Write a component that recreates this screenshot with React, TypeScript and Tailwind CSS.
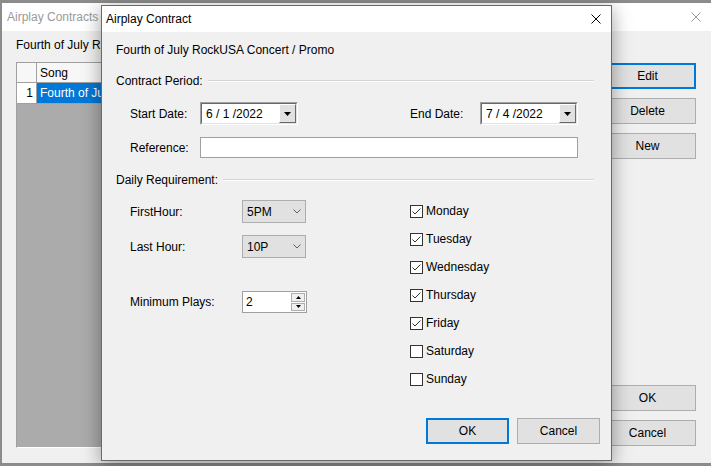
import React from "react";

function XIcon({ color }: { color: string }) {
  return (
    <svg width="10" height="10" viewBox="0 0 10 10" className="block">
      <path d="M0.5 0.5 L9.5 9.5 M9.5 0.5 L0.5 9.5" stroke={color} strokeWidth="1" fill="none" />
    </svg>
  );
}

function Btn({ label, def, w }: { label: string; def?: boolean; w: string }) {
  return (
    <div
      className={
        "h-[26px] flex items-center justify-center bg-[#e1e1e1] shrink-0 " +
        w +
        (def ? " border-2 border-[#0078d7]" : " border border-[#adadad]")
      }
    >
      {label}
    </div>
  );
}

function DateBox({ value }: { value: string }) {
  return (
    <div className="w-[98px] h-[23px] border-t border-l border-[#a0a0a0] border-b border-r border-b-white border-r-white">
      <div className="w-full h-full border-t border-l border-[#696969] border-b border-r border-b-[#e3e3e3] border-r-[#e3e3e3] bg-white flex items-center">
        <span className="pl-[4px] flex-1">{value}</span>
        <div className="w-[17px] h-[19px] bg-[#e1e1e1] border-t border-l border-white border-b border-r border-b-[#696969] border-r-[#696969] flex items-center justify-center">
          <svg width="7" height="4" viewBox="0 0 7 4" className="block">
            <path d="M0 0 L7 0 L3.5 4 Z" fill="#000" />
          </svg>
        </div>
      </div>
    </div>
  );
}

function Combo({ value }: { value: string }) {
  return (
    <div className="w-[64px] h-[23px] bg-[#e1e1e1] border border-[#adadad] flex items-center pl-[4px] pr-[4px]">
      <span className="flex-1">{value}</span>
      <svg width="8" height="5" viewBox="0 0 8 5" className="block">
        <path d="M0.5 0.5 L4 4 L7.5 0.5" stroke="#606060" strokeWidth="1" fill="none" />
      </svg>
    </div>
  );
}

function Check({ label, checked }: { label: string; checked: boolean }) {
  return (
    <div className="h-[28px] flex items-center">
      <div className="w-[13px] h-[13px] border border-[#333333] bg-white flex items-center justify-center">
        {checked && (
          <svg width="11" height="11" viewBox="0 0 11 11" className="block">
            <path d="M1.5 5.5 L4 8 L9.5 2.5" stroke="#333333" strokeWidth="1" fill="none" />
          </svg>
        )}
      </div>
      <span className="ml-[3px]">{label}</span>
    </div>
  );
}

export default function App() {
  const days: [string, boolean][] = [
    ["Monday", true],
    ["Tuesday", true],
    ["Wednesday", true],
    ["Thursday", true],
    ["Friday", true],
    ["Saturday", false],
    ["Sunday", false],
  ];
  return (
    <div className="w-[711px] h-[466px] overflow-hidden bg-[#8c8c8c] relative pt-[2px] pl-[1px] font-['Liberation_Sans',Arial,sans-serif] text-[12px] leading-[16px] text-black">
      {/* background window */}
      <div className="w-[711px] h-[462px] border border-[#8a8a8a] bg-[#f0f0f0] flex flex-col">
        <div className="h-[28px] bg-white flex items-center justify-between pl-[5px] pr-[10px] shrink-0">
          <span className="text-[#9a9a9a]">Airplay Contracts</span>
          <XIcon color="#9a9a9a" />
        </div>
        <div className="flex-1 flex flex-col pl-[14px] pr-[15px]">
          <div className="mt-[6px] h-[16px] whitespace-nowrap">Fourth of July RockUSA Concert / Promo</div>
          <div className="mt-[9px] flex">
            <div className="w-[572px] h-[386px] border-t border-l border-[#a0a0a0] border-b border-r border-b-white border-r-white bg-[#ababab] flex flex-col">
              <div className="flex h-[20px]">
                <div className="w-[20px] bg-[#f7f7f7] border-r border-b border-[#a0a0a0]" />
                <div className="w-[200px] bg-[#f7f7f7] border-r border-b border-[#a0a0a0] pl-[3px] flex items-center">Song</div>
              </div>
              <div className="flex h-[21px]">
                <div className="w-[20px] bg-white border-r border-b border-[#a0a0a0] flex items-center justify-end pr-[3px]">1</div>
                <div className="w-[200px] bg-[#0078d7] text-white border-r border-b border-[#a0a0a0] pl-[3px] flex items-center whitespace-nowrap overflow-hidden">
                  Fourth of July RockUSA Concert / Promo
                </div>
              </div>
            </div>
            <div className="ml-auto w-[97px] h-[386px] flex flex-col justify-between pt-[1px] pb-[2px]">
              <div className="flex flex-col gap-[9px]">
                <Btn label="Edit" def w="w-[97px]" />
                <Btn label="Delete" w="w-[97px]" />
                <Btn label="New" w="w-[97px]" />
              </div>
              <div className="flex flex-col gap-[9px]">
                <Btn label="OK" w="w-[97px]" />
                <Btn label="Cancel" w="w-[97px]" />
              </div>
            </div>
          </div>
        </div>
      </div>

      {/* dialog */}
      <div className="absolute left-[101px] top-[5px] w-[511px] h-[456px] border border-[#6a6a6a] bg-[#f0f0f0] flex flex-col shadow-[0_4px_18px_rgba(0,0,0,0.38)]">
        <div className="h-[26px] bg-white flex items-center justify-between pl-[4px] pr-[10px] shrink-0">
          <span>Airplay Contract</span>
          <XIcon color="#000000" />
        </div>
        <div className="flex flex-col pl-[14px]">
          <div className="mt-[10px] h-[16px] whitespace-nowrap">Fourth of July RockUSA Concert / Promo</div>
          <div className="mt-[15px] h-[16px] flex items-center">
            <span>Contract Period:</span>
            <div className="flex-1 ml-[5px] mr-[17px] h-[2px] border-t border-[#d5d5d5] border-b border-b-white" />
          </div>
          <div className="mt-[13px] h-[23px] flex items-center pl-[14px]">
            <span className="w-[70px]">Start Date:</span>
            <DateBox value="6 / 1 /2022" />
            <span className="ml-[112px] w-[70px]">End Date:</span>
            <DateBox value="7 / 4 /2022" />
          </div>
          <div className="mt-[12px] h-[21px] flex items-center pl-[14px]">
            <span className="w-[70px]">Reference:</span>
            <div className="w-[378px] h-[21px] bg-white border border-[#a0a0a0]" />
          </div>
          <div className="mt-[14px] h-[16px] flex items-center">
            <span>Daily Requirement:</span>
            <div className="flex-1 ml-[5px] mr-[17px] h-[2px] border-t border-[#d5d5d5] border-b border-b-white" />
          </div>
          <div className="mt-[9px] flex">
            <div className="w-[294px] pl-[14px] flex flex-col">
              <div className="mt-[3px] h-[23px] flex items-center">
                <span className="w-[112px]">FirstHour:</span>
                <Combo value="5PM" />
              </div>
              <div className="mt-[12px] h-[23px] flex items-center">
                <span className="w-[112px]">Last Hour:</span>
                <Combo value="10P" />
              </div>
              <div className="mt-[33px] h-[22px] flex items-center">
                <span className="w-[112px]">Minimum Plays:</span>
                <div className="w-[65px] h-[22px] bg-white border border-[#a0a0a0] flex">
                  <span className="flex-1 pl-[3px] flex items-center">2</span>
                  <div className="w-[16px] flex flex-col gap-[1px] p-[1px]">
                    <div className="flex-1 bg-[#f0f0f0] border border-[#adadad] flex items-center justify-center">
                      <svg width="5" height="3" viewBox="0 0 5 3" className="block">
                        <path d="M0 3 L5 3 L2.5 0 Z" fill="#000" />
                      </svg>
                    </div>
                    <div className="flex-1 bg-[#f0f0f0] border border-[#adadad] flex items-center justify-center">
                      <svg width="5" height="3" viewBox="0 0 5 3" className="block">
                        <path d="M0 0 L5 0 L2.5 3 Z" fill="#000" />
                      </svg>
                    </div>
                  </div>
                </div>
              </div>
            </div>
            <div className="flex flex-col">
              {days.map(([d, c]) => (
                <Check key={d} label={d} checked={c} />
              ))}
            </div>
          </div>
          <div className="mt-[25px] flex justify-end gap-[8px] pr-[11px]">
            <Btn label="OK" def w="w-[83px]" />
            <Btn label="Cancel" w="w-[83px]" />
          </div>
        </div>
      </div>
    </div>
  );
}
